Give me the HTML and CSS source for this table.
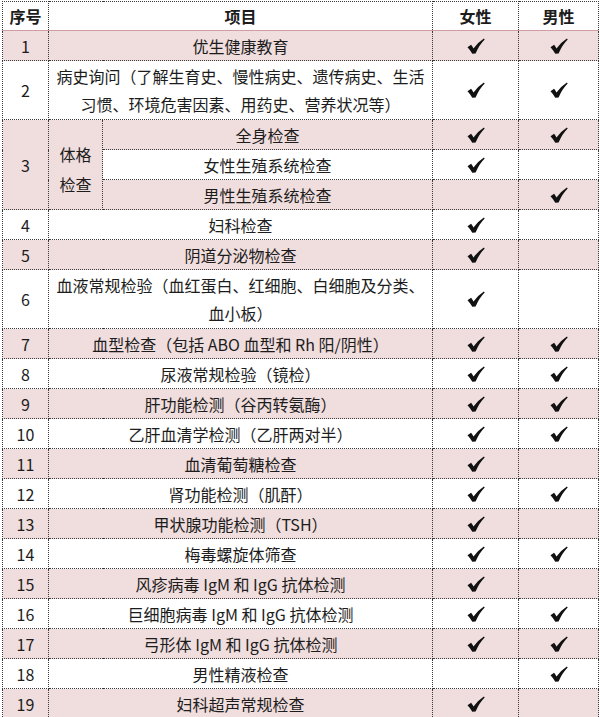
FILE: index.html
```html
<!DOCTYPE html>
<html lang="zh-CN">
<head>
<meta charset="utf-8">
<title>孕前检查项目</title>
<link rel="stylesheet" href="styles.css">
</head>
<body>
<svg class="defs" width="0" height="0" aria-hidden="true">
  <symbol id="tick" viewBox="0 0 18 16">
    <path d="M0.5 9.2 L4.1 6.8 Q5.4 8.5 6.5 10.5 Q10.6 4.4 16.9 0.4 L17.7 1.5 Q12.2 6.9 8.6 15.5 L5.3 15.7 Q3.3 12.1 0.5 9.2 Z"/>
  </symbol>
</svg>
<table class="grid">
  <colgroup>
    <col class="c-no"><col class="c-sub"><col class="c-item"><col class="c-f"><col class="c-m">
  </colgroup>
  <thead>
    <tr class="head"><th>序号</th><th colspan="2">项目</th><th>女性</th><th>男性</th></tr>
  </thead>
  <tbody>
    <tr class="pink"><td>1</td><td colspan="2">优生健康教育</td><td class="ck"><svg class="tk"><use href="#tick"/></svg></td><td class="ck"><svg class="tk"><use href="#tick"/></svg></td></tr>
    <tr class="two"><td>2</td><td colspan="2">病史询问（了解生育史、慢性病史、遗传病史、生活<br>习惯、环境危害因素、用药史、营养状况等）</td><td class="ck"><svg class="tk"><use href="#tick"/></svg></td><td class="ck"><svg class="tk"><use href="#tick"/></svg></td></tr>
    <tr class="pink"><td rowspan="3">3</td><td rowspan="3" class="sub">体格<br>检查</td><td>全身检查</td><td class="ck"><svg class="tk"><use href="#tick"/></svg></td><td class="ck"><svg class="tk"><use href="#tick"/></svg></td></tr>
    <tr class="white"><td>女性生殖系统检查</td><td class="ck"><svg class="tk"><use href="#tick"/></svg></td><td class="ck"></td></tr>
    <tr class="pink"><td>男性生殖系统检查</td><td class="ck"></td><td class="ck"><svg class="tk"><use href="#tick"/></svg></td></tr>
    <tr><td>4</td><td colspan="2">妇科检查</td><td class="ck"><svg class="tk"><use href="#tick"/></svg></td><td class="ck"></td></tr>
    <tr class="pink"><td>5</td><td colspan="2">阴道分泌物检查</td><td class="ck"><svg class="tk"><use href="#tick"/></svg></td><td class="ck"></td></tr>
    <tr class="two"><td>6</td><td colspan="2">血液常规检验（血红蛋白、红细胞、白细胞及分类、<br>血小板）</td><td class="ck"><svg class="tk"><use href="#tick"/></svg></td><td class="ck"></td></tr>
    <tr class="pink"><td>7</td><td colspan="2">血型检查（包括 ABO 血型和 Rh 阳/阴性）</td><td class="ck"><svg class="tk"><use href="#tick"/></svg></td><td class="ck"><svg class="tk"><use href="#tick"/></svg></td></tr>
    <tr><td>8</td><td colspan="2">尿液常规检验（镜检）</td><td class="ck"><svg class="tk"><use href="#tick"/></svg></td><td class="ck"><svg class="tk"><use href="#tick"/></svg></td></tr>
    <tr class="pink"><td>9</td><td colspan="2">肝功能检测（谷丙转氨酶）</td><td class="ck"><svg class="tk"><use href="#tick"/></svg></td><td class="ck"><svg class="tk"><use href="#tick"/></svg></td></tr>
    <tr><td>10</td><td colspan="2">乙肝血清学检测（乙肝两对半）</td><td class="ck"><svg class="tk"><use href="#tick"/></svg></td><td class="ck"><svg class="tk"><use href="#tick"/></svg></td></tr>
    <tr class="pink"><td>11</td><td colspan="2">血清葡萄糖检查</td><td class="ck"><svg class="tk"><use href="#tick"/></svg></td><td class="ck"></td></tr>
    <tr><td>12</td><td colspan="2">肾功能检测（肌酐）</td><td class="ck"><svg class="tk"><use href="#tick"/></svg></td><td class="ck"><svg class="tk"><use href="#tick"/></svg></td></tr>
    <tr class="pink"><td>13</td><td colspan="2">甲状腺功能检测（TSH）</td><td class="ck"><svg class="tk"><use href="#tick"/></svg></td><td class="ck"></td></tr>
    <tr><td>14</td><td colspan="2">梅毒螺旋体筛查</td><td class="ck"><svg class="tk"><use href="#tick"/></svg></td><td class="ck"><svg class="tk"><use href="#tick"/></svg></td></tr>
    <tr class="pink"><td>15</td><td colspan="2">风疹病毒 IgM 和 IgG 抗体检测</td><td class="ck"><svg class="tk"><use href="#tick"/></svg></td><td class="ck"></td></tr>
    <tr><td>16</td><td colspan="2">巨细胞病毒 IgM 和 IgG 抗体检测</td><td class="ck"><svg class="tk"><use href="#tick"/></svg></td><td class="ck"><svg class="tk"><use href="#tick"/></svg></td></tr>
    <tr class="pink"><td>17</td><td colspan="2">弓形体 IgM 和 IgG 抗体检测</td><td class="ck"><svg class="tk"><use href="#tick"/></svg></td><td class="ck"><svg class="tk"><use href="#tick"/></svg></td></tr>
    <tr><td>18</td><td colspan="2">男性精液检查</td><td class="ck"></td><td class="ck"><svg class="tk"><use href="#tick"/></svg></td></tr>
    <tr class="pink"><td>19</td><td colspan="2">妇科超声常规检查</td><td class="ck"><svg class="tk"><use href="#tick"/></svg></td><td class="ck"></td></tr>
  </tbody>
</table>
</body>
</html>
```
FILE: styles.css
```css
html, body {
  margin: 0;
  padding: 0;
  background: #ffffff;
}
body {
  padding: 1px 0 0 2px;
  font-family: "Noto Sans CJK SC", "Noto Sans", sans-serif;
  color: #1c1c1c;
  overflow: hidden;
}
.defs {
  position: absolute;
  width: 0;
  height: 0;
}
.grid {
  border-collapse: collapse;
  table-layout: fixed;
  width: 596px;
}
.c-no { width: 46px; }
.c-sub { width: 54px; }
.c-item { width: 330px; }
.c-f { width: 86px; }
.c-m { width: 80px; }
.grid th, .grid td {
  border: 1px dotted #3a3a3a;
  padding: 0 4px;
  text-align: center;
  vertical-align: middle;
  font-size: 16px;
  line-height: 28px;
  white-space: nowrap;
}
.grid th {
  font-weight: 700;
  height: 28px;
}
.grid .head th {
  border-bottom: 1px solid #cf9ea2;
}
.grid td {
  height: 29px;
}
.grid tr.two td {
  height: 58px;
}
.grid tr.pink td {
  background: #f0dddd;
}
.grid td.sub {
  background: #f0dddd;
  line-height: 30px;
  padding-top: 8px;
}
.grid td.ck {
  line-height: 0;
}
.tk {
  width: 18px;
  height: 16px;
  fill: #111111;
  vertical-align: middle;
}
```
